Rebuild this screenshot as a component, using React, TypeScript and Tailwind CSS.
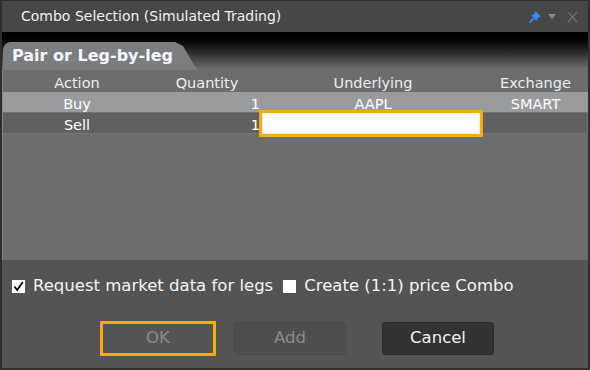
import React from "react";

function Pin() {
  return (
    <svg width="14" height="14" viewBox="0 0 14 14">
      <path d="M7.5 1 L13 6.5 L11.2 7 L8.8 9.4 L8.8 11.2 L2.8 5.2 L4.6 5.2 L7 2.8 Z" fill="#2f8cff" />
      <path d="M5.5 8.5 L1.5 12.5" stroke="#2f8cff" strokeWidth="1.8" />
    </svg>
  );
}

export default function App() {
  const font = { fontFamily: '"DejaVu Sans", Tahoma, sans-serif' };
  return (
    <div
      className="w-[590px] h-[370px] bg-[#2e2e2e] px-[2px] pt-[1px] pb-[2px] flex flex-col overflow-hidden text-[#f2f2f2]"
      style={font}
    >
      <div className="h-[31px] shrink-0 bg-[#474747] flex items-center pl-[19px] pr-[6px]">
        <span className="text-[14px] text-[#f0f0f0]">Combo Selection (Simulated Trading)</span>
        <div className="ml-auto flex items-center gap-[5px]">
          <Pin />
          <svg width="10" height="8" viewBox="0 0 10 8">
            <path d="M1 1 L9 1 L5 6 Z" fill="#8a8a8a" />
          </svg>
          <svg width="20" height="14" viewBox="0 0 20 14">
            <path d="M6 2 L15 12 M15 2 L6 12" stroke="#6e6e6e" strokeWidth="1.2" />
          </svg>
        </div>
      </div>
      <div className="h-[38px] shrink-0 bg-gradient-to-b from-[#000000] to-[#707173] flex items-end pl-[1px]">
        <div className="h-[28px] w-[194px] bg-[#7c7d7f] rounded-tl-[8px] [clip-path:polygon(0_0,172px_0,180px_4px,194px_28px,0_28px)] flex items-center pl-[9px]">
          <span className="text-[16px] font-bold text-[#f4f8ff]">Pair or Leg-by-leg</span>
        </div>
      </div>
      <div className="h-[190px] shrink-0 bg-[#6c6d6f] border-l border-[#8a8b8d] flex flex-col text-[14.5px]">
        <div className="h-[22px] pt-[3px] grid grid-cols-[148px_112px_220px_1fr] items-center text-[#eeeeee]">
          <div className="text-center">Action</div>
          <div className="text-center">Quantity</div>
          <div className="text-center">Underlying</div>
          <div className="text-center">Exchange</div>
        </div>
        <div className="h-[20px] pt-[2px] bg-[#9a9b9c] grid grid-cols-[148px_112px_220px_1fr] items-center text-white">
          <div className="text-center">Buy</div>
          <div className="text-right pr-[3px]">1</div>
          <div className="text-center">AAPL</div>
          <div className="text-center">SMART</div>
        </div>
        <div className="h-[22px] bg-[#5f6062] border-y border-r border-[#737476] grid grid-cols-[148px_112px_220px_1fr] items-center text-white">
          <div className="text-center pt-[2px]">Sell</div>
          <div className="text-right pr-[3px] pt-[2px]">1</div>
          <div className="relative h-full">
            <div className="absolute left-[-4px] top-[-3px] w-[224px] h-[27px] border-[3px] border-[#f7ac0b] bg-white shadow-[inset_0_0_3px_#cfcfcf]" />
          </div>
          <div />
        </div>
      </div>
      <div className="flex-1 bg-[#545454] flex flex-col">
        <div className="h-[52px] flex items-center pl-[10px] text-[16.5px] text-[#f5f5f5] gap-[10px]">
          <div className="flex items-center gap-[8px]">
            <div className="w-[13px] h-[13px] bg-white flex items-center justify-center">
              <svg width="11" height="11" viewBox="0 0 11 11">
                <path d="M1.5 5.5 L4.2 9 L9.8 1" stroke="#000" strokeWidth="1.8" fill="none" />
              </svg>
            </div>
            <span>Request market data for legs</span>
          </div>
          <div className="flex items-center gap-[8px]">
            <div className="w-[13px] h-[13px] bg-white" />
            <span>Create (1:1) price Combo</span>
          </div>
        </div>
        <div className="flex items-center pl-[98px] pt-[9px] text-[16.5px]">
          <div className="w-[116px] h-[35px] border-[3px] border-[#f7ac0b] bg-[#555555] flex items-center justify-center text-[#8c8c8c]">
            OK
          </div>
          <div className="ml-[18px] w-[112px] h-[33px] rounded-[3px] border border-[#4a4a4a] bg-[#4e4e4e] flex items-center justify-center text-[#8a8a8a]">
            Add
          </div>
          <div className="ml-[36px] w-[112px] h-[33px] rounded-[3px] border border-[#2a2a2a] bg-[#333333] flex items-center justify-center text-[#f2f2f2]">
            Cancel
          </div>
        </div>
      </div>
    </div>
  );
}
